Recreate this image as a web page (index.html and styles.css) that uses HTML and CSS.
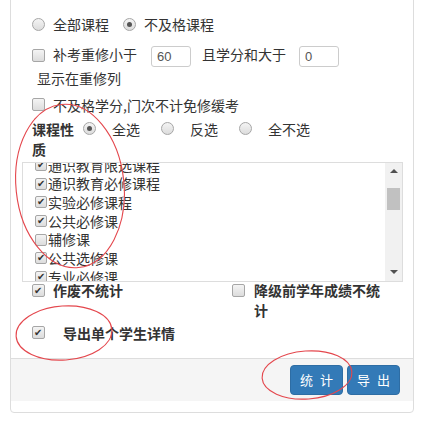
FILE: index.html
```html
<!DOCTYPE html>
<html lang="zh-CN">
<head>
<meta charset="utf-8">
<title>统计</title>
<link rel="stylesheet" href="styles.css">
</head>
<body>
<div class="page">
  <div class="panel">
    <div class="panel-body">
      <div class="row r0">
        <label class="opt"><input type="radio" name="a" class="rd"><span>全部</span></label>
        <label class="opt"><input type="radio" name="a" class="rd"><span>按学期</span></label>
        <label class="opt"><input type="radio" name="a" class="rd"><span>按学年</span></label>
        <label class="opt"><input type="radio" name="a" class="rd"><span>其他</span></label>
      </div>
      <div class="row r1">
        <label class="opt"><input type="radio" name="b" class="rd"><span>全部课程</span></label>
        <label class="opt"><input type="radio" name="b" class="rd" checked><span>不及格课程</span></label>
      </div>
      <div class="r2">
        <input type="checkbox" class="cb cb-first"><span class="t1">补考重修小于</span><input type="text" class="num n1" value="60"><span>且学分和大于</span><input type="text" class="num n2" value="0"><span class="nw">显示在重修列</span>
      </div>
      <div class="row r3">
        <label class="opt"><input type="checkbox" class="cb"><span>不及格学分,门次不计免修缓考</span></label>
      </div>
      <div class="row r4">
        <div class="lbl">课程性质</div>
        <div class="radios">
          <label class="opt2"><input type="radio" name="c" class="rd" checked><span>全选</span></label>
          <label class="opt2"><input type="radio" name="c" class="rd"><span>反选</span></label>
          <label class="opt2"><input type="radio" name="c" class="rd"><span>全不选</span></label>
        </div>
      </div>
      <div class="listbox">
        <div class="list-view">
          <ul class="items">
            <li><input type="checkbox" class="cb sm" checked>通识教育限选课程</li>
            <li><input type="checkbox" class="cb sm" checked>通识教育必修课程</li>
            <li><input type="checkbox" class="cb sm" checked>实验必修课程</li>
            <li><input type="checkbox" class="cb sm" checked>公共必修课</li>
            <li><input type="checkbox" class="cb sm">辅修课</li>
            <li><input type="checkbox" class="cb sm" checked>公共选修课</li>
            <li><input type="checkbox" class="cb sm" checked>专业必修课</li>
            <li><input type="checkbox" class="cb sm" checked>专业选修课</li>
          </ul>
        </div>
        <div class="sbar">
          <div class="sbtn"><span class="arr up"></span></div>
          <div class="strack"><div class="thumb"></div></div>
          <div class="sbtn"><span class="arr down"></span></div>
        </div>
      </div>
      <div class="r5">
        <label class="col left"><input type="checkbox" class="cb" checked><span class="b">作废不统计</span></label>
        <label class="col right"><input type="checkbox" class="cb"><span class="b wrap">降级前学年成绩不统计</span></label>
      </div>
      <div class="row r6">
        <label class="opt"><input type="checkbox" class="cb wide" checked><span class="b">导出单个学生详情</span></label>
      </div>
    </div>
    <div class="footer">
      <button class="btn">统 计</button>
      <button class="btn">导 出</button>
    </div>
  </div>
  <svg class="marks" width="424" height="423" viewBox="0 0 424 423">
    <ellipse cx="70" cy="186" rx="54" ry="82" transform="rotate(-6 70 186)"/>
    <ellipse cx="64" cy="333" rx="48" ry="27" transform="rotate(-4 64 333)"/>
    <ellipse cx="307" cy="375" rx="45" ry="24" transform="rotate(-4 307 375)"/>
  </svg>
</div>
</body>
</html>
```
FILE: styles.css
```css
* { box-sizing: border-box; }
body {
  margin: 0;
  font-family: "Noto Sans CJK SC", "Noto Sans", sans-serif;
  font-size: 14px;
  line-height: 20px;
  color: #333;
  background: #fff;
}
.page {
  position: relative;
  width: 424px;
  height: 423px;
  overflow: hidden;
}
.panel {
  margin: -60px 0 0 10px;
  width: 404px;
  border: 1px solid #ddd;
  border-radius: 4px;
  padding-bottom: 11px;
  background: #fff;
}
.panel-body {
  padding: 42px 10px 15px 11px;
}
.row {
  display: flex;
  align-items: center;
  padding-left: 10px;
  height: 20px;
}
.opt {
  display: inline-flex;
  align-items: center;
  margin-right: 14px;
}
.opt input { margin: 0 8px 0 0; }
.r0 { margin-top: -1px; }
.r0 .opt { margin-right: 17px; }
.r1 { margin-top: 12px; }

/* custom radio / checkbox */
.rd, .cb {
  -webkit-appearance: none;
  appearance: none;
  width: 13px;
  height: 13px;
  flex: none;
  position: relative;
  border: 1px solid #a6a6a6;
  background: linear-gradient(#f4f4f4, #dcdcdc);
  vertical-align: middle;
}
.rd { border-radius: 50%; }
.rd:checked::after {
  content: "";
  position: absolute;
  left: 3px;
  top: 3px;
  width: 5px;
  height: 5px;
  border-radius: 50%;
  background: #555;
}
.cb { border-radius: 2px; }
.cb:checked::after {
  content: "✔";
  position: absolute;
  left: 1px;
  top: -4px;
  font-family: "DejaVu Sans", sans-serif;
  font-size: 10px;
  line-height: 20px;
  color: #333;
}
.cb.sm { width: 12px; height: 12px; margin: 0 1px 0 0; }
.cb.sm:checked::after { left: 1px; top: -5px; }

.r2 {
  margin-top: 9px;
  padding-left: 15px;
  line-height: 22px;
}
.nw { display: inline-block; white-space: nowrap; }
.cb-first { margin: 0 8px 0 -5px; position: relative; top: -1px; }
.num {
  display: inline-block;
  width: 40px;
  height: 21px;
  border: 1px solid #ccc;
  border-radius: 3px;
  padding: 0 5px;
  font-family: "Liberation Sans", sans-serif;
  font-size: 13px;
  color: #555;
  vertical-align: middle;
  background: #fff;
}
.n1 { margin: 0 11px 0 14px; }
.n2 { margin: 0 0 0 13px; }
.r3 { margin-top: 6px; }
.r4 {
  margin-top: 4px;
  height: auto;
  align-items: flex-start;
}
.lbl {
  width: 45px;
  margin-right: 6px;
  font-weight: bold;
  line-height: 20px;
}
.radios { display: flex; height: 20px; align-items: center; }
.opt2 { display: inline-flex; align-items: center; margin-right: 21px; }
.opt2 input { margin: 0 16px 0 0; }

.listbox {
  margin-top: 3px;
  height: 120px;
  border: 1px solid #ddd;
  display: flex;
}
.list-view {
  flex: 1;
  overflow: hidden;
}
.items {
  list-style: none;
  margin: -7px 0 0 0;
  padding: 0 0 0 12px;
}
.items li {
  height: 18.67px;
  line-height: 18.67px;
  display: flex;
  align-items: center;
  white-space: nowrap;
}
.sbar {
  width: 17px;
  background: #f1f1f1;
  display: flex;
  flex-direction: column;
}
.sbtn {
  height: 17px;
  display: flex;
  align-items: center;
  justify-content: center;
}
.strack { flex: 1; padding: 8px 2px 0; }
.thumb { height: 22px; background: #c1c1c1; }
.arr {
  width: 0;
  height: 0;
  border-left: 4px solid transparent;
  border-right: 4px solid transparent;
}
.arr.up { border-bottom: 4px solid #505050; }
.arr.down { border-top: 4px solid #505050; }

.r5 {
  display: flex;
  align-items: flex-start;
  line-height: 20px;
  margin-top: -2px;
}
.col { display: flex; align-items: flex-start; }
.col input { margin: 4px 8px 0 0; }
.left { width: 210px; padding-left: 10px; }
.right { flex: 1; }
.right input { margin-right: 9px; }
.b { font-weight: bold; }
.wrap { max-width: 136px; }
.r6 { margin-top: 3px; }
.cb.wide { margin-right: 18px; }

.footer {
  border-top: 1px solid #ddd;
  background: #f5f5f5;
  padding: 6px 13px 6px 0;
  display: flex;
  justify-content: flex-end;
  gap: 4px;
}
.btn {
  width: 53px;
  height: 30px;
  border: 1px solid #2e6da4;
  border-radius: 4px;
  background: #337ab7;
  color: #fff;
  font-family: "Noto Sans CJK SC", sans-serif;
  font-size: 13px;
  letter-spacing: 2px;
  padding: 0 0 0 2px;
}
.marks {
  position: absolute;
  left: 0;
  top: 0;
  pointer-events: none;
}
.marks ellipse {
  fill: none;
  stroke: #e4474d;
  stroke-width: 1.1;
}
```
